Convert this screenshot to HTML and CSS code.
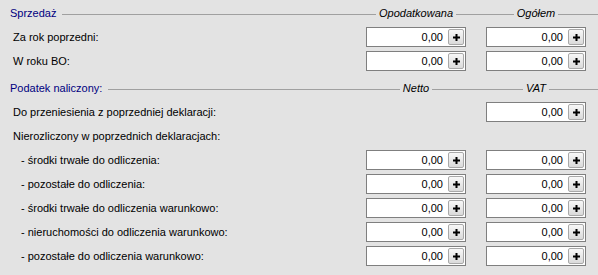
FILE: index.html
```html
<!DOCTYPE html>
<html lang="pl">

<head>
    <meta charset="UTF-8">
    <title>Podatek</title>
    <link rel="stylesheet" href="styles.css">
</head>

<body>
    <main class="form">
        <!-- Sprzedaż -->
        <div class="section">
            <p class="sectionTitle">Sprzedaż</p>
            <p class="colTitle">Opodatkowana</p>
            <p class="colTitle">Ogółem</p>
        </div>
        <div class="row">
            <p class="label">Za rok poprzedni:</p>
            <div class="field"><span class="value">0,00</span><button class="plus"><svg width="7" height="7" viewBox="0 0 7 7"><path d="M2.5 0h2v2.5H7v2H4.5V7h-2V4.5H0v-2h2.5z" /></svg></button></div>
            <div class="field"><span class="value">0,00</span><button class="plus"><svg width="7" height="7" viewBox="0 0 7 7"><path d="M2.5 0h2v2.5H7v2H4.5V7h-2V4.5H0v-2h2.5z" /></svg></button></div>
        </div>
        <div class="row">
            <p class="label">W roku BO:</p>
            <div class="field"><span class="value">0,00</span><button class="plus"><svg width="7" height="7" viewBox="0 0 7 7"><path d="M2.5 0h2v2.5H7v2H4.5V7h-2V4.5H0v-2h2.5z" /></svg></button></div>
            <div class="field"><span class="value">0,00</span><button class="plus"><svg width="7" height="7" viewBox="0 0 7 7"><path d="M2.5 0h2v2.5H7v2H4.5V7h-2V4.5H0v-2h2.5z" /></svg></button></div>
        </div>

        <!-- Podatek naliczony -->
        <div class="section second">
            <p class="sectionTitle">Podatek naliczony:</p>
            <p class="colTitle">Netto</p>
            <p class="colTitle">VAT</p>
        </div>
        <div class="row">
            <p class="label">Do przeniesienia z poprzedniej deklaracji:</p>
            <div></div>
            <div class="field"><span class="value">0,00</span><button class="plus"><svg width="7" height="7" viewBox="0 0 7 7"><path d="M2.5 0h2v2.5H7v2H4.5V7h-2V4.5H0v-2h2.5z" /></svg></button></div>
        </div>
        <div class="row">
            <p class="label">Nierozliczony w poprzednich deklaracjach:</p>
        </div>
        <div class="row">
            <p class="label sub">- środki trwałe do odliczenia:</p>
            <div class="field"><span class="value">0,00</span><button class="plus"><svg width="7" height="7" viewBox="0 0 7 7"><path d="M2.5 0h2v2.5H7v2H4.5V7h-2V4.5H0v-2h2.5z" /></svg></button></div>
            <div class="field"><span class="value">0,00</span><button class="plus"><svg width="7" height="7" viewBox="0 0 7 7"><path d="M2.5 0h2v2.5H7v2H4.5V7h-2V4.5H0v-2h2.5z" /></svg></button></div>
        </div>
        <div class="row">
            <p class="label sub">- pozostałe do odliczenia:</p>
            <div class="field"><span class="value">0,00</span><button class="plus"><svg width="7" height="7" viewBox="0 0 7 7"><path d="M2.5 0h2v2.5H7v2H4.5V7h-2V4.5H0v-2h2.5z" /></svg></button></div>
            <div class="field"><span class="value">0,00</span><button class="plus"><svg width="7" height="7" viewBox="0 0 7 7"><path d="M2.5 0h2v2.5H7v2H4.5V7h-2V4.5H0v-2h2.5z" /></svg></button></div>
        </div>
        <div class="row">
            <p class="label sub">- środki trwałe do odliczenia warunkowo:</p>
            <div class="field"><span class="value">0,00</span><button class="plus"><svg width="7" height="7" viewBox="0 0 7 7"><path d="M2.5 0h2v2.5H7v2H4.5V7h-2V4.5H0v-2h2.5z" /></svg></button></div>
            <div class="field"><span class="value">0,00</span><button class="plus"><svg width="7" height="7" viewBox="0 0 7 7"><path d="M2.5 0h2v2.5H7v2H4.5V7h-2V4.5H0v-2h2.5z" /></svg></button></div>
        </div>
        <div class="row">
            <p class="label sub">- nieruchomości do odliczenia warunkowo:</p>
            <div class="field"><span class="value">0,00</span><button class="plus"><svg width="7" height="7" viewBox="0 0 7 7"><path d="M2.5 0h2v2.5H7v2H4.5V7h-2V4.5H0v-2h2.5z" /></svg></button></div>
            <div class="field"><span class="value">0,00</span><button class="plus"><svg width="7" height="7" viewBox="0 0 7 7"><path d="M2.5 0h2v2.5H7v2H4.5V7h-2V4.5H0v-2h2.5z" /></svg></button></div>
        </div>
        <div class="row">
            <p class="label sub">- pozostałe do odliczenia warunkowo:</p>
            <div class="field"><span class="value">0,00</span><button class="plus"><svg width="7" height="7" viewBox="0 0 7 7"><path d="M2.5 0h2v2.5H7v2H4.5V7h-2V4.5H0v-2h2.5z" /></svg></button></div>
            <div class="field"><span class="value">0,00</span><button class="plus"><svg width="7" height="7" viewBox="0 0 7 7"><path d="M2.5 0h2v2.5H7v2H4.5V7h-2V4.5H0v-2h2.5z" /></svg></button></div>
        </div>
    </main>
</body>

</html>
```

FILE: styles.css
```css
/* reset */
body,
main,
div,
p,
button {
    margin: 0;
    padding: 0;
    box-sizing: border-box;
}

html,
body {
    height: 100%;
}

body {
    background-color: #E3E3E3;
    font-family: 'Liberation Sans', Arial, sans-serif;
    font-size: 11px;
    color: #000000;
}

.form {
    display: flex;
    flex-direction: column;
    padding-top: 1px;
}

/* section header with etched line */
.section,
.row {
    display: grid;
    grid-template-columns: 1fr 100px 100px;
    column-gap: 20px;
    padding-right: 12px;
}

.section {
    height: 24px;
    align-items: center;
    background: linear-gradient(#A0A0A0, #A0A0A0) no-repeat 0 13px / 100% 1px;
}

.section.second {
    margin-top: 3px;
}

.sectionTitle {
    justify-self: start;
    padding: 0 6px 0 10px;
    line-height: 14px;
    color: #000080;
    background-color: #E3E3E3;
}

.colTitle {
    justify-self: center;
    padding: 0 3px;
    line-height: 14px;
    font-style: italic;
    background-color: #E3E3E3;
}

/* rows */
.row {
    height: 24px;
    align-items: center;
}

.label {
    padding-left: 13px;
    line-height: 14px;
}

.label.sub {
    padding-left: 21px;
}

.field {
    display: flex;
    align-items: center;
    height: 20px;
    border: 1px solid #7F7F7F;
    background-color: #FFFFFF;
}

.value {
    flex-grow: 1;
    padding-right: 5px;
    text-align: right;
    line-height: 18px;
}

.plus {
    display: flex;
    align-items: center;
    justify-content: center;
    width: 16px;
    height: 16px;
    margin-right: 1px;
    border: 1px solid #A8A8A8;
    border-radius: 2px;
    background: linear-gradient(#F8F8F8, #DADADA);
}

.plus svg {
    fill: #000000;
}
```
